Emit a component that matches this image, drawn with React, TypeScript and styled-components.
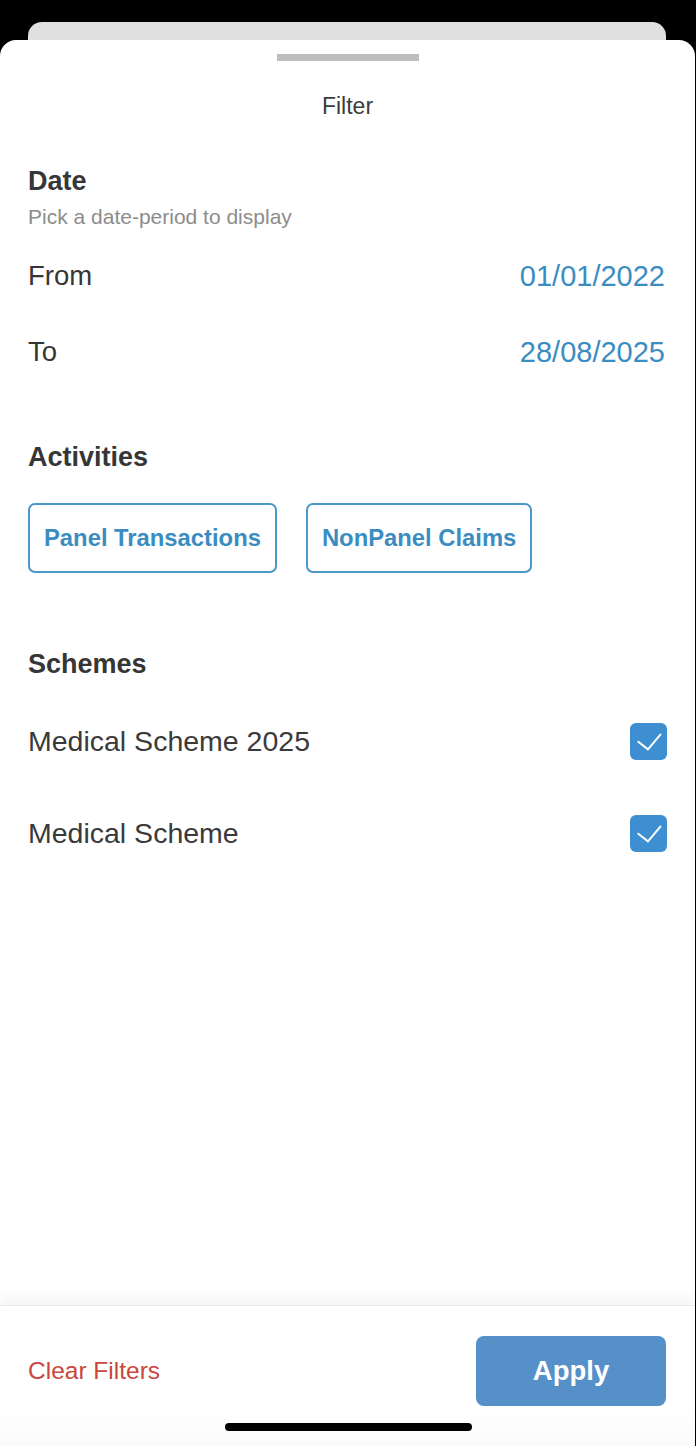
import React, { useState } from "react"
import styled, { createGlobalStyle } from "styled-components"

const GlobalStyle = createGlobalStyle`
  html, body, #root {
    margin: 0;
    padding: 0;
    height: 100%;
  }
  body {
    background: #000;
    font-family: "Liberation Sans", Arial, Helvetica, sans-serif;
    -webkit-font-smoothing: antialiased;
  }
`

const Screen = styled.div`
  display: flex;
  flex-direction: column;
  min-height: 100vh;
  background: #000;
`

const BackCard = styled.div`
  height: 30px;
  margin: 22px 30px 0 28px;
  background: #e0e0e0;
  border-radius: 14px 14px 0 0;
`

const Sheet = styled.div`
  flex: 1;
  display: flex;
  flex-direction: column;
  margin-top: -12px;
  margin-right: 1px;
  background: #fff;
  border-radius: 16px 16px 0 0;
`

const Handle = styled.div`
  align-self: center;
  width: 142px;
  height: 7px;
  margin-top: 14px;
  background: #bdbdbd;
`

const Title = styled.div`
  margin-top: 31px;
  line-height: 28px;
  font-size: 23px;
  color: #3c3c3c;
  text-align: center;
`

const Content = styled.div`
  flex: 1;
  display: flex;
  flex-direction: column;
  padding: 0 28px;
`

const SectionTitle = styled.div<{ $gap: number }>`
  margin-top: ${(p) => p.$gap}px;
  line-height: 32px;
  font-size: 27px;
  font-weight: 700;
  color: #363636;
`

const Hint = styled.div`
  margin-top: 8px;
  line-height: 24px;
  font-size: 21px;
  color: #8c8c8c;
`

const DateList = styled.div`
  margin-top: 9px;
  display: flex;
  flex-direction: column;
`

const DateRow = styled.div`
  height: 76px;
  display: flex;
  align-items: center;
  justify-content: space-between;
  padding-right: 2px;
`

const RowLabel = styled.span`
  font-size: 27.5px;
  color: #363636;
`

const DateValue = styled.span`
  font-size: 29px;
  color: #3b8dc1;
`

const ChipRow = styled.div`
  margin-top: 30px;
  display: flex;
  gap: 29px;
`

const Chip = styled.button<{ $active?: boolean }>`
  height: 70px;
  padding: 0 14px;
  border: 2px solid #4a97c9;
  border-radius: 7px;
  background: ${(p) => (p.$active ? "#eef6fb" : "#fff")};
  color: #3b8dc1;
  font-family: inherit;
  font-size: 23.8px;
  font-weight: 700;
  cursor: pointer;
`

const SchemeList = styled.div`
  margin-top: 15px;
  display: flex;
  flex-direction: column;
`

const SchemeRow = styled.label`
  height: 92px;
  display: flex;
  align-items: center;
  justify-content: space-between;
  cursor: pointer;
`

const SchemeName = styled.span`
  font-size: 28.5px;
  color: #3a3a3a;
`

const CheckBox = styled.span<{ $checked: boolean }>`
  width: 37px;
  height: 37px;
  border-radius: 6px;
  background: ${(p) => (p.$checked ? "#3e8fd1" : "#fff")};
  border: ${(p) => (p.$checked ? "none" : "2px solid #9ab")};
  box-sizing: border-box;
  display: flex;
  align-items: center;
  justify-content: center;
`

const Footer = styled.div`
  display: flex;
  flex-direction: column;
  border-top: 1px solid #e9e9e9;
  box-shadow: 0 -8px 14px rgba(0, 0, 0, 0.045);
  background: linear-gradient(#fff 75%, #fafafa);
`

const FooterBar = styled.div`
  display: flex;
  align-items: center;
  justify-content: space-between;
  padding: 30px 29px 0 28px;
`

const ClearButton = styled.button`
  padding: 0;
  border: none;
  background: none;
  font-family: inherit;
  font-size: 24.5px;
  color: #c9473d;
  cursor: pointer;
`

const ApplyButton = styled.button`
  width: 190px;
  height: 70px;
  border: none;
  border-radius: 8px;
  background: #5690c8;
  color: #fff;
  font-family: inherit;
  font-size: 27.5px;
  font-weight: 700;
  cursor: pointer;
`

const HomeIndicator = styled.div`
  align-self: center;
  width: 247px;
  height: 8px;
  margin: 17px 0 15px 1px;
  border-radius: 4px;
  background: #000;
`

const Check = () => (
  <svg width="37" height="37" viewBox="0 0 37 37" fill="none">
    <path
      d="M8.3 18.8 L18 26.4 L30.4 11.6"
      stroke="#fff"
      strokeWidth="2"
      strokeLinecap="round"
      strokeLinejoin="round"
    />
  </svg>
)

const schemes = ["Medical Scheme 2025", "Medical Scheme"]

export default function App() {
  const [checked, setChecked] = useState<Record<string, boolean>>({
    "Medical Scheme 2025": true,
    "Medical Scheme": true,
  })

  return (
    <>
      <GlobalStyle />
      <Screen>
        <BackCard />
        <Sheet>
          <Handle />
          <Title>Filter</Title>
          <Content>
            <SectionTitle $gap={45}>Date</SectionTitle>
            <Hint>Pick a date-period to display</Hint>
            <DateList>
              <DateRow>
                <RowLabel>From</RowLabel>
                <DateValue>01/01/2022</DateValue>
              </DateRow>
              <DateRow>
                <RowLabel>To</RowLabel>
                <DateValue>28/08/2025</DateValue>
              </DateRow>
            </DateList>

            <SectionTitle $gap={51}>Activities</SectionTitle>
            <ChipRow>
              <Chip>Panel Transactions</Chip>
              <Chip>NonPanel Claims</Chip>
            </ChipRow>

            <SectionTitle $gap={75}>Schemes</SectionTitle>
            <SchemeList>
              {schemes.map((name) => (
                <SchemeRow
                  key={name}
                  onClick={() =>
                    setChecked((c) => ({ ...c, [name]: !c[name] }))
                  }
                >
                  <SchemeName>{name}</SchemeName>
                  <CheckBox $checked={checked[name]}>
                    {checked[name] && <Check />}
                  </CheckBox>
                </SchemeRow>
              ))}
            </SchemeList>
          </Content>
          <Footer>
            <FooterBar>
              <ClearButton>Clear Filters</ClearButton>
              <ApplyButton>Apply</ApplyButton>
            </FooterBar>
            <HomeIndicator />
          </Footer>
        </Sheet>
      </Screen>
    </>
  )
}
